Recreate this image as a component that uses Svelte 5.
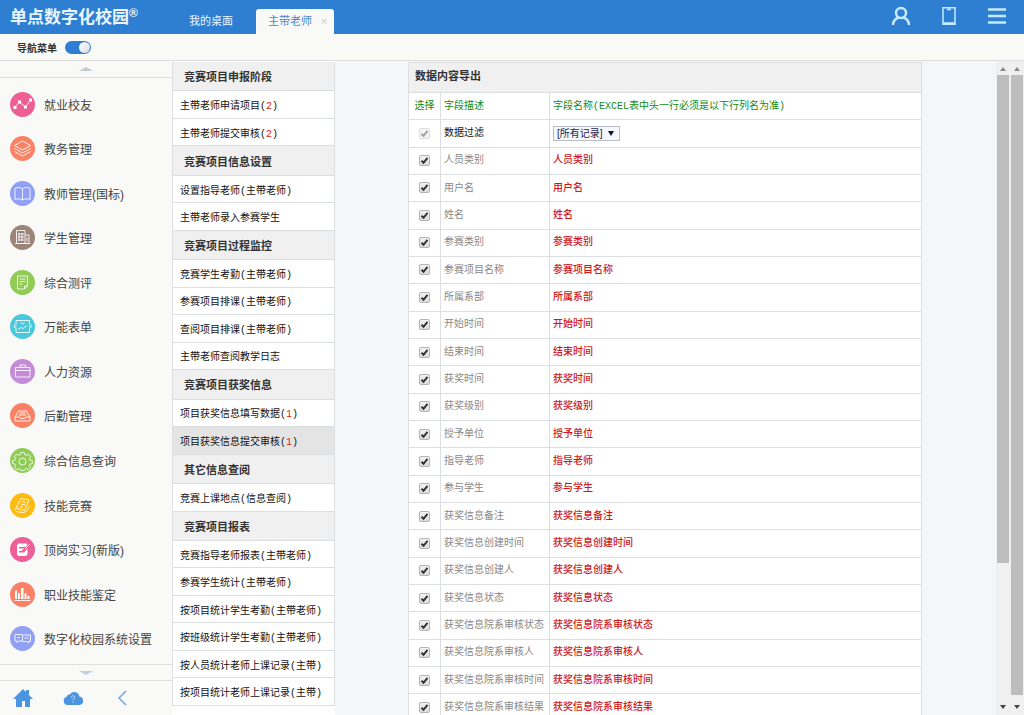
<svelte:head>
  <title>单点数字化校园</title>
</svelte:head>

<div class="page">
  <header class="topbar">
    <h1 class="logo">单点数字化校园<sup>®</sup></h1>
    <nav class="tabs">
      <a href="#desktop" class="tab">我的桌面</a>
      <a href="#teacher" class="tab active">主带老师 <span class="close">×</span></a>
    </nav>
    <div class="tools">
      <button aria-label="用户">
        <svg viewBox="0 0 20 20" width="20" height="20"><circle cx="10" cy="7" r="5" /><path d="M2 19c0-4 3-7 6-7.500M18 19c0-4-3-7-6-7.500" /></svg>
      </button>
      <button aria-label="手机">
        <svg viewBox="0 0 20 20" width="20" height="20"><path class="thin" d="M4 1.800h12v16.400h-12zM4 17h12M8 3.500h4" /></svg>
      </button>
      <button aria-label="菜单">
        <svg viewBox="0 0 20 20" width="20" height="20"><path d="M1 3.500h18M1 10h18M1 16.500h18" /></svg>
      </button>
    </div>
  </header>

  <div class="subbar">
    <label for="navSwitch">导航菜单</label>
    <input id="navSwitch" class="switch" type="checkbox" bind:checked={navOpen} />
  </div>

  <div class="body">
    <aside class="sidebar">
      <button class="scroll-arrow" aria-label="向上"><span class="triangle up"></span></button>
      <nav class="modules">
        {#each modules as item}
          <a href="#module">
            <svg viewBox="0 0 25 25" width="25" height="25">
              <circle cx="12.500" cy="12.500" r="12.500" fill={item.color} />
              <path class="line" d={item.line} />
              {#if item.solid}
                <path class="solid" d={item.solid} />
              {/if}
            </svg>
            <span>{item.name}</span>
          </a>
        {/each}
      </nav>
      <button class="scroll-arrow bottom" aria-label="向下"><span class="triangle down"></span></button>
      <div class="side-footer">
        <button aria-label="首页">
          <svg viewBox="0 0 20 20" width="20" height="20"><path fill="#4b94e0" d="M10 1l3 3V2h3v5l4 4h-3v8h-5v-6H9v6H3v-8H0z" /></svg>
        </button>
        <button aria-label="帮助">
          <svg viewBox="0 0 20 20" width="20" height="20">
            <path fill="#4b94e0" d="M4.500 17a4.200 4.200 0 0 1-.8-8.200A3.300 3.300 0 0 1 7 6.300 5.200 5.200 0 0 1 16.400 8.600 4.200 4.200 0 0 1 15.600 17z" />
            <path fill="none" stroke="#d8e9fa" d="M8.300 9.500c0-2.400 3.600-2.200 3.400 0 0 1.300-1.600 1.300-1.600 2.800M10.100 13.500v1.200" />
          </svg>
        </button>
        <button aria-label="收起">
          <svg viewBox="0 0 20 20" width="20" height="20"><path fill="none" stroke="#75a5dc" stroke-width="1.500" d="M13 3l-7 7 7 7" /></svg>
        </button>
      </div>
    </aside>

    <nav class="menu">
      {#each menu as group}
        <h2>{group.title}</h2>
        {#each group.items as item}
          <a href="#item" class:current={item.current}>
            <span>{item.name}{#if item.count}(<b>{item.count}</b>){/if}</span>
          </a>
        {/each}
      {/each}
    </nav>

    <main class="content">
      <table>
        <colgroup>
          <col class="col-check" />
          <col class="col-desc" />
          <col />
        </colgroup>
        <thead>
          <tr class="caption"><th colspan="3">数据内容导出</th></tr>
          <tr class="heads">
            <th class="check">选择</th>
            <th>字段描述</th>
            <th>字段名称(EXCEL表中头一行必须是以下行列名为准)</th>
          </tr>
        </thead>
        <tbody>
          <tr class="filter">
            <td class="check"><input type="checkbox" checked disabled aria-label="数据过滤" /></td>
            <td><label for="filter">数据过滤</label></td>
            <td>
              <select id="filter">
                <option>[所有记录]</option>
              </select>
            </td>
          </tr>
          {#each fields as field, i}
            <tr>
              <td class="check"><input id="field{i}" type="checkbox" checked /></td>
              <td><label for="field{i}">{field}</label></td>
              <td class="name">{field}</td>
            </tr>
          {/each}
        </tbody>
      </table>
    </main>

    {#each scrollbars as bar}
      <div class="scrollbar">
        <span class="triangle up"></span>
        <div class="track"><div class="thumb" style="height: {bar}%"></div></div>
        <span class="triangle down dark"></span>
      </div>
    {/each}
  </div>
</div>

<style>
  :global(body) {
    margin: 0;
  }

  .page {
    display: flex;
    flex-direction: column;
    height: 100vh;
    overflow: hidden;
    background: #f4f7fa;
    color: #111;
    font-family: 'Liberation Sans', 'Noto Sans CJK SC', sans-serif;
    font-size: 10px;
  }

  * {
    box-sizing: border-box;
  }

  a {
    color: inherit;
    text-decoration: none;
  }

  button {
    display: flex;
    align-items: center;
    justify-content: center;
    padding: 0;
    border: 0;
    background: none;
  }

  .topbar {
    display: flex;
    flex: none;
    height: 34px;
    background: #2e7fd2;
    color: #e8f5ff;
  }

  .logo {
    width: 167px;
    margin: 0;
    padding-left: 10px;
    font-size: 17px;
    font-weight: 700;
    line-height: 36px;
    white-space: nowrap;
  }

  .logo sup {
    font-size: 12px;
    line-height: 0;
    vertical-align: 6px;
  }

  .tabs {
    display: flex;
    align-items: flex-end;
    flex: 1;
    gap: 1px;
  }

  .tab {
    padding: 0 22px;
    font-size: 11px;
    line-height: 25px;
  }

  .tab.active {
    display: flex;
    gap: 9px;
    padding: 0 7px 0 12px;
    border-radius: 3px 3px 0 0;
    background: #f9f9f7;
    color: #4d86cb;
  }

  .close {
    color: #c9c9c9;
  }

  .tools {
    display: flex;
    align-items: center;
    gap: 28px;
    padding: 0 17px 3px 0;
  }

  .tools svg {
    fill: none;
    stroke: #c4ebff;
    stroke-width: 2.5;
  }

  .tools .thin {
    stroke-width: 1.5;
  }

  .subbar {
    display: flex;
    flex: none;
    align-items: center;
    gap: 8px;
    height: 27px;
    padding-left: 17px;
    border-bottom: 1px solid #dcdcdc;
    background: #f9f9f6;
    color: #333;
    font-weight: 700;
  }

  .switch {
    width: 26px;
    height: 13px;
    margin: 0;
    padding: 1px;
    border-radius: 7px;
    background: #9aa7b5;
    appearance: none;
  }

  .switch::before {
    display: block;
    width: 11px;
    height: 11px;
    border-radius: 50%;
    background: linear-gradient(135deg, #fff, #d6dce4);
    content: '';
  }

  .switch:checked {
    padding-left: 14px;
    background: #2e7fd2;
  }

  .body {
    display: flex;
    flex: 1;
    min-height: 0;
  }

  .sidebar {
    display: flex;
    flex: none;
    flex-direction: column;
    width: 172px;
    background: #f9f9f7;
  }

  .scroll-arrow {
    flex: none;
    height: 17px;
    border-bottom: 1px solid #dedede;
  }

  .scroll-arrow.bottom {
    border-top: 1px solid #dedede;
  }

  .triangle {
    width: 0;
    border: 7px solid transparent;
    border-top-width: 0;
    border-bottom: 4px solid #c3c9d3;
  }

  .triangle.down {
    border-top: 4px solid #c3cfe0;
    border-bottom-width: 0;
  }

  .modules {
    display: flex;
    flex: 1;
    flex-direction: column;
    padding: 4px 0 3px;
    color: #444;
    font-size: 12px;
  }

  .modules a {
    display: flex;
    flex: 1;
    align-items: center;
    gap: 9px;
    padding-left: 10px;
  }

  .line {
    fill: none;
    stroke: #fff;
    stroke-opacity: 0.85;
  }

  .solid {
    fill: #fff;
  }

  .side-footer {
    display: flex;
    flex: none;
    gap: 30px;
    height: 34px;
    padding-left: 13px;
  }

  .menu {
    display: flex;
    flex: none;
    flex-direction: column;
    width: 163px;
    padding: 1px 0 9px;
    background: #fff;
  }

  .menu h2,
  .menu a {
    display: flex;
    align-items: center;
    margin: 0;
    border: 1px solid #dcdfe1;
    border-top: 0;
    white-space: nowrap;
  }

  .menu h2 {
    flex: 30 1 0;
    padding-left: 11px;
    background: #f0f0f0;
    color: #333;
    font-size: 11px;
  }

  .menu a {
    flex: 28 1 0;
    padding-left: 7px;
    font-family: 'Liberation Mono', 'Noto Sans CJK SC', monospace;
  }

  .menu a.current {
    background: #e4e4e4;
  }

  .menu b {
    color: #d22;
    font-weight: 400;
  }

  .content {
    flex: 1;
    min-width: 0;
    padding: 1px 74px 0 73px;
    overflow: hidden;
  }

  table {
    width: 100%;
    height: 660px;
    border-collapse: collapse;
    background: #fff;
    font-family: 'Liberation Mono', 'Noto Sans CJK SC', monospace;
    table-layout: fixed;
  }

  .col-check {
    width: 32px;
  }

  .col-desc {
    width: 109px;
  }

  th,
  td {
    padding: 0 3px;
    border: 1px solid #dcdfe1;
    font-weight: 400;
    line-height: 15px;
    text-align: left;
    white-space: nowrap;
  }

  .caption {
    height: 30px;
  }

  .caption th {
    padding-left: 6px;
    background: #f0f0f0;
    color: #333;
    font-size: 11px;
    font-weight: 700;
  }

  .heads {
    height: 27px;
    color: #128a12;
  }

  .check {
    padding: 0;
    text-align: center;
  }

  td {
    color: #888;
  }

  .filter td {
    color: #111;
  }

  td.name {
    color: #d01818;
    font-weight: 500;
  }

  .check input {
    width: 11px;
    height: 11px;
    margin: 0;
    border: 1px solid #b4b4b4;
    border-radius: 2px;
    background: url("data:image/svg+xml,%3Csvg xmlns='http://www.w3.org/2000/svg' viewBox='0 0 9 9'%3E%3Cpath d='M1.500 4.800l2 2L7.500 1.800' fill='none' stroke='%23333' stroke-width='2'/%3E%3C/svg%3E") center / 9px 9px, linear-gradient(#f2f2f2, #dcdcdc);
    vertical-align: middle;
    appearance: none;
  }

  .check input:disabled {
    opacity: 0.45;
  }

  select {
    width: 67px;
    height: 15px;
    padding: 0 0 0 3px;
    border: 1px solid #b9bec6;
    border-radius: 0;
    background: #f5f8fc url("data:image/svg+xml,%3Csvg xmlns='http://www.w3.org/2000/svg' viewBox='0 0 6 5'%3E%3Cpath d='M0 0h6L3 5z' fill='%23113'/%3E%3C/svg%3E") right 5px center / 6px 5px no-repeat;
    color: #1c2350;
    font: 10px/13px 'Liberation Sans', 'Noto Sans CJK SC', sans-serif;
    vertical-align: middle;
    appearance: none;
  }

  .scrollbar {
    display: flex;
    flex: none;
    flex-direction: column;
    align-items: center;
    width: 14px;
    padding: 6px 1px;
    background: #f0f0f0;
  }

  .scrollbar .triangle {
    border-right-width: 3px;
    border-left-width: 3px;
    border-bottom-color: #888;
  }

  .scrollbar .dark {
    border-top-color: #444;
  }

  .track {
    flex: 1;
    width: 100%;
    margin: 4px 0;
  }

  .thumb {
    background: #bdbdbd;
  }
</style>

<script lang="ts">
  type Module = {
    name: string;
    color: string;
    line: string;
    solid?: string;
  };
  type MenuItem = {
    name: string;
    count?: number;
    current?: boolean;
  };

  let navOpen = $state(true);

  // Thumb heights, in percent of the track
  const scrollbars = [78, 99];

  const modules: Module[] = [
    {
      name: '就业校友',
      color: '#ef5f93',
      line: 'M5 15l4.500-5 6 5L20.500 8',
      solid: 'M3.500 14h3v3h-3zM8 8.500h3v3h-3zM14 13.500h3v3h-3zM19 6.500h3v3h-3z',
    },
    {
      name: '教务管理',
      color: '#fa8366',
      line: 'M12.500 5l8 4.500-8 4.500-8-4.500zM4.500 12.500l8 4.500 8-4.500M4.500 15.500l8 4.500 8-4.500',
    },
    {
      name: '教师管理(国标)',
      color: '#90a0f6',
      line: 'M12.500 8v11M12.500 8C10.500 6 7.500 6 5 7.500v11c2.500-1 5.500-1 7.500.5 2-1.500 5-1.500 7.500-.5v-11C17.500 6 14.500 6 12.500 8z',
    },
    {
      name: '学生管理',
      color: '#9c8379',
      line: 'M6.500 18.500v-13h8.500v13zM15 10h4v8.500h-4M9 8v8M12 8v8M8 9h6M8 12h6M8 15h6M5 18.500h15M17 12.500v4',
    },
    {
      name: '综合测评',
      color: '#8fcb55',
      line: 'M7.500 6h10v10l-3 3h-7zM17.500 16h-3v3M9.500 9h6M9.500 11.500h6M9.500 14h3',
    },
    {
      name: '万能表单',
      color: '#49c8dc',
      line: 'M6 11V6.500h13.500V11M6 14v4.500h13.500V14M4.500 10.500v3l2-1M21 10.500v3l-2-1M8 15.500l3-2 2 1 4-3M10.500 8.500l2 1.500 2-1.500',
    },
    {
      name: '人力资源',
      color: '#c48bd8',
      line: 'M5.500 8.500h14.500v9.500H5.500zM10 8.500V6h5.500v2.500M5.500 11.500h14.500',
    },
    {
      name: '后勤管理',
      color: '#fa8063',
      line: 'M8.500 8h8l3.500 6v4H5v-4zM5 14h4.500l1 1.500h4l1-1.500H20M9.500 10h6M8.500 12h8',
    },
    {
      name: '综合信息查询',
      color: '#8fcb55',
      line: 'M10.800 4.500h3.400l.6 2.300 1.500.6 2-1.200 2.300 2.300-1.200 2 .6 1.500 2.300.6v3l-2.300.6-.6 1.400 1.200 2-2.300 2.200-2-1.200-1.500.6-.6 1.300h-3.400l-.6-1.300-1.500-.6-2 1.200-2.300-2.200 1.200-2-.6-1.400-2.300-.6v-3l2.300-.6.6-1.500-1.200-2 2.300-2.300 2 1.200 1.500-.6zM16 13.500a3.500 3.500 0 1 1-7 0a3.500 3.500 0 1 1 7 0z',
    },
    {
      name: '技能竞赛',
      color: '#fbbb13',
      line: 'M11 5.500l8 1.500-4.500 10.500-8.500-2.500zM6 15c-2 2 0 3.500 2 4l6 .5c4-2 4.500-5 6-7M12 8.500l4 1M11 11l4 1M10 13.500l3 1',
    },
    {
      name: '顶岗实习(新版)',
      color: '#ec5f97',
      line: 'M15 12l5-5',
      solid: 'M8.500 6.500h8l1 1.500-2 2H9v1.500h5l-2.500 2.500H9v1.500h5l3.500-4v6l-1.500 1.500H8.500L7 17.500v-9z',
    },
    {
      name: '职业技能鉴定',
      color: '#fa8066',
      line: 'M4.500 18.500h16',
      solid: 'M5 8.500h2v8.500h-2zM8 11h2v6H8zM11 6h2.500v11H11zM14.500 11.500h2v5.500h-2zM17.500 14h2v3h-2z',
    },
    {
      name: '数字化校园系统设置',
      color: '#92a0f4',
      line: 'M12 8.500H5v6.500h2v1.500l2-1.500h3M12.500 9h8v6.500h-2v1.500l-2-1.500h-4zM7 11.500h3M14.500 12h4',
    },
  ];

  const menu: { title: string; items: MenuItem[] }[] = [
    {
      title: '竞赛项目申报阶段',
      items: [
        { name: '主带老师申请项目', count: 2 },
        { name: '主带老师提交审核', count: 2 },
      ],
    },
    {
      title: '竞赛项目信息设置',
      items: [
        { name: '设置指导老师(主带老师)' },
        { name: '主带老师录入参赛学生' },
      ],
    },
    {
      title: '竞赛项目过程监控',
      items: [
        { name: '竞赛学生考勤(主带老师)' },
        { name: '参赛项目排课(主带老师)' },
        { name: '查阅项目排课(主带老师)' },
        { name: '主带老师查阅教学日志' },
      ],
    },
    {
      title: '竞赛项目获奖信息',
      items: [
        { name: '项目获奖信息填写数据', count: 1 },
        { name: '项目获奖信息提交审核', count: 1, current: true },
      ],
    },
    {
      title: '其它信息查阅',
      items: [
        { name: '竞赛上课地点(信息查阅)' },
      ],
    },
    {
      title: '竞赛项目报表',
      items: [
        { name: '竞赛指导老师报表(主带老师)' },
        { name: '参赛学生统计(主带老师)' },
        { name: '按项目统计学生考勤(主带老师)' },
        { name: '按班级统计学生考勤(主带老师)' },
        { name: '按人员统计老师上课记录(主带)' },
        { name: '按项目统计老师上课记录(主带)' },
      ],
    },
  ];

  const fields = [
    '人员类别',
    '用户名',
    '姓名',
    '参赛类别',
    '参赛项目名称',
    '所属系部',
    '开始时间',
    '结束时间',
    '获奖时间',
    '获奖级别',
    '授予单位',
    '指导老师',
    '参与学生',
    '获奖信息备注',
    '获奖信息创建时间',
    '获奖信息创建人',
    '获奖信息状态',
    '获奖信息院系审核状态',
    '获奖信息院系审核人',
    '获奖信息院系审核时间',
    '获奖信息院系审核结果',
  ];
</script>
